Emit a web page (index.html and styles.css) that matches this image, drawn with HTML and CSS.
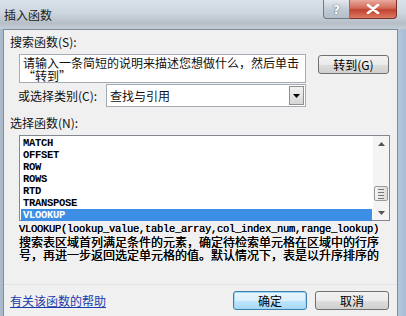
FILE: index.html
```html
<!DOCTYPE html>
<html lang="zh-CN">
  <head>
    <meta charset="UTF-8" />
    <title>插入函数</title>
    <link rel="stylesheet" href="styles.css">
  </head>
  <body>
    <div class="window">
      <div class="titlebar">
        <span class="title">插入函数</span>
        <div class="caption-buttons">
          <span class="cap-btn help">?</span>
          <span class="cap-btn close">
            <svg width="14" height="10" viewBox="0 0 14 10">
              <path d="M2 1 L12 9 M12 1 L2 9" stroke="#fff" stroke-width="2.6" stroke-linecap="round" />
            </svg>
          </span>
        </div>
      </div>
      <div class="client">
        <div class="label">搜索函数(S):</div>
        <div class="search-row">
          <div class="search-box">请输入一条简短的说明来描述您想做什么，然后单击<br>“转到”</div>
          <button class="btn go">转到(G)</button>
        </div>
        <div class="category-row">
          <span class="category-label">或选择类别(C):</span>
          <div class="select">
            <span class="select-value">查找与引用</span>
            <span class="drop">
              <svg width="7" height="4" viewBox="0 0 7 4"><path d="M0 0 H7 L3.5 4 Z" fill="#000" /></svg>
            </span>
          </div>
        </div>
        <div class="label list-label">选择函数(N):</div>
        <div class="listbox">
          <ul class="items">
            <li>MATCH</li>
            <li>OFFSET</li>
            <li>ROW</li>
            <li>ROWS</li>
            <li>RTD</li>
            <li>TRANSPOSE</li>
            <li class="selected">VLOOKUP</li>
          </ul>
          <div class="scrollbar">
            <svg width="7" height="4" viewBox="0 0 7 4"><path d="M0 4 H7 L3.5 0 Z" fill="#555" /></svg>
            <div class="track"><div class="thumb"><i></i><i></i><i></i><i></i></div></div>
            <svg width="7" height="4" viewBox="0 0 7 4"><path d="M0 0 H7 L3.5 4 Z" fill="#555" /></svg>
          </div>
        </div>
        <div class="signature">VLOOKUP(lookup_value,table_array,col_index_num,range_lookup)</div>
        <p class="desc">搜索表区域首列满足条件的元素，确定待检索单元格在区域中的行序号，再进一步返回选定单元格的值。默认情况下，表是以升序排序的</p>
        <div class="separator"></div>
        <div class="footer">
          <a class="help-link" href="#">有关该函数的帮助</a>
          <div class="buttons">
            <button class="btn default">确定</button>
            <button class="btn">取消</button>
          </div>
        </div>
      </div>
    </div>
  </body>
</html>
```

FILE: styles.css
```css
body {
  margin: 0;
  width: 406px;
  height: 316px;
  overflow: hidden;
  font-family: "Noto Sans CJK SC", "Liberation Sans", sans-serif;
  font-size: 12px;
  color: #111;
}
.window {
  display: flex;
  flex-direction: column;
  height: 316px;
  padding: 0 8px 0 3px;
  background: linear-gradient(90deg, #a9b9c9 0, #b7c6d4 3%, #cfd9e3 30%, #c3cfdb 70%, #b9cde2 97%, #a8bdd4 100%);
  box-sizing: border-box;
}
.titlebar {
  display: flex;
  justify-content: space-between;
  align-items: flex-start;
  height: 29px;
  flex-shrink: 0;
  margin: 0 -8px 0 -3px;
  padding: 0 9px 0 4px;
  background: linear-gradient(180deg, #d9e1ea 0, #cdd6df 45%, #b6bfc8 80%, #c4ccd5 100%);
}
.title {
  margin-top: 6px;
  font-size: 12px;
  color: #1b1b1b;
}
.caption-buttons {
  display: flex;
}
.cap-btn {
  display: flex;
  align-items: center;
  justify-content: center;
  height: 19px;
  border: 1px solid #6d7a88;
  border-top: none;
  box-sizing: border-box;
}
.help {
  width: 27px;
  border-radius: 0 0 0 4px;
  background: linear-gradient(180deg, #e3e8ee, #c2ccd6 50%, #b3bec9);
  color: #fff;
  font-family: "DejaVu Sans", sans-serif;
  font-size: 13px;
  font-weight: bold;
  text-shadow: 0 0 1px #55606b, 0 0 1px #55606b;
}
.close {
  width: 47px;
  border-left: none;
  border-color: #7a3128;
  border-radius: 0 0 4px 0;
  background: linear-gradient(180deg, #e9a99e, #d26a5a 45%, #c0422f 55%, #dd7b63);
}
.client {
  flex: 1;
  padding: 5px 0 0 6px;
  background: #f0f0f0;
  border: 1px solid #7d8c9b;
  border-bottom: none;
}
.label {
  line-height: 14px;
}
.search-row {
  display: flex;
  align-items: flex-start;
  margin: 5px 0 0 9px;
}
.search-box {
  width: 287px;
  height: 29px;
  padding: 1px 3px 0;
  border: 1px solid #a5acb5;
  background: #fff;
  font-size: 12px;
  line-height: 13px;
  box-sizing: border-box;
}
.btn {
  height: 19px;
  padding: 0;
  border: 1px solid #707070;
  border-radius: 3px;
  background: linear-gradient(180deg, #f2f2f2 0, #ebebeb 50%, #dddddd 51%, #cfcfcf 100%);
  font-family: "Noto Sans CJK SC", sans-serif;
  font-size: 12px;
  line-height: 15px;
  color: #000;
}
.go {
  width: 71px;
  margin: 1px 0 0 12px;
}
.category-row {
  display: flex;
  align-items: center;
  margin: 1px 0 0 8px;
}
.category-label {
  width: 88px;
  font-size: 12px;
}
.select {
  display: flex;
  align-items: center;
  justify-content: space-between;
  width: 200px;
  height: 23px;
  padding: 0 1px 0 3px;
  border: 1px solid #a5acb5;
  background: #fff;
  box-sizing: border-box;
}
.drop {
  display: flex;
  align-items: center;
  justify-content: center;
  width: 15px;
  height: 19px;
  border: 1px solid #8e8f8f;
  background: linear-gradient(180deg, #f2f2f2, #d6d6d6);
  box-sizing: border-box;
}
.list-label {
  margin-top: 9px;
}
.listbox {
  display: flex;
  width: 371px;
  height: 86px;
  margin: 5px 0 0 9px;
  border: 1px solid #828790;
  background: #fff;
  box-sizing: border-box;
}
.items {
  flex: 1;
  margin: 0;
  padding: 1px 1px 0;
  list-style: none;
}
.items li,
.signature {
  font-family: "Liberation Mono", monospace;
  font-size: 10.5px;
  letter-spacing: -0.3px;
  line-height: 12px;
  padding-left: 2px;
  color: #000;
}
.items li {
  font-weight: bold;
}
.items .selected {
  background: #3d8fe6;
  color: #fff;
}
.scrollbar {
  display: flex;
  flex-direction: column;
  align-items: center;
  justify-content: space-between;
  width: 16px;
  padding: 6px 0 5px;
  background: #f4f4f4;
  box-sizing: border-box;
}
.track {
  flex: 1;
  display: flex;
  flex-direction: column;
  justify-content: flex-end;
  padding-bottom: 10px;
}
.thumb {
  display: flex;
  flex-direction: column;
  justify-content: center;
  gap: 2px;
  width: 14px;
  height: 15px;
  border: 1px solid #9a9a9a;
  border-radius: 2px;
  background: linear-gradient(90deg, #f3f3f3, #dcdcdc);
  box-sizing: border-box;
}
.thumb i {
  display: block;
  height: 1px;
  margin: 0 3px;
  background: #777;
}
.signature {
  margin: 2px 0 0 9px;
  padding: 0;
  text-shadow: 0 0 0.4px #000;
}
.desc {
  margin: 0 0 0 9px;
  width: 372px;
  font-size: 12px;
  line-height: 13px;
  color: #000;
  text-shadow: 0 0 0.4px #000;
}
.separator {
  height: 1px;
  margin: 23px 0 0 -6px;
  background: #dfe3e7;
}
.footer {
  display: flex;
  justify-content: space-between;
  align-items: center;
  margin-top: 6px;
  padding-right: 8px;
}
.help-link {
  color: #1c3aa9;
  font-size: 12px;
}
.buttons {
  display: flex;
  gap: 8px;
}
.buttons .btn {
  width: 74px;
}
.default {
  border-color: #3c7fb1;
  box-shadow: inset 0 0 0 1px #9fd6f3;
  background: linear-gradient(180deg, #eaf6fd 0, #d9f0fc 50%, #bee6fd 51%, #a7d9f5 100%);
}
```
